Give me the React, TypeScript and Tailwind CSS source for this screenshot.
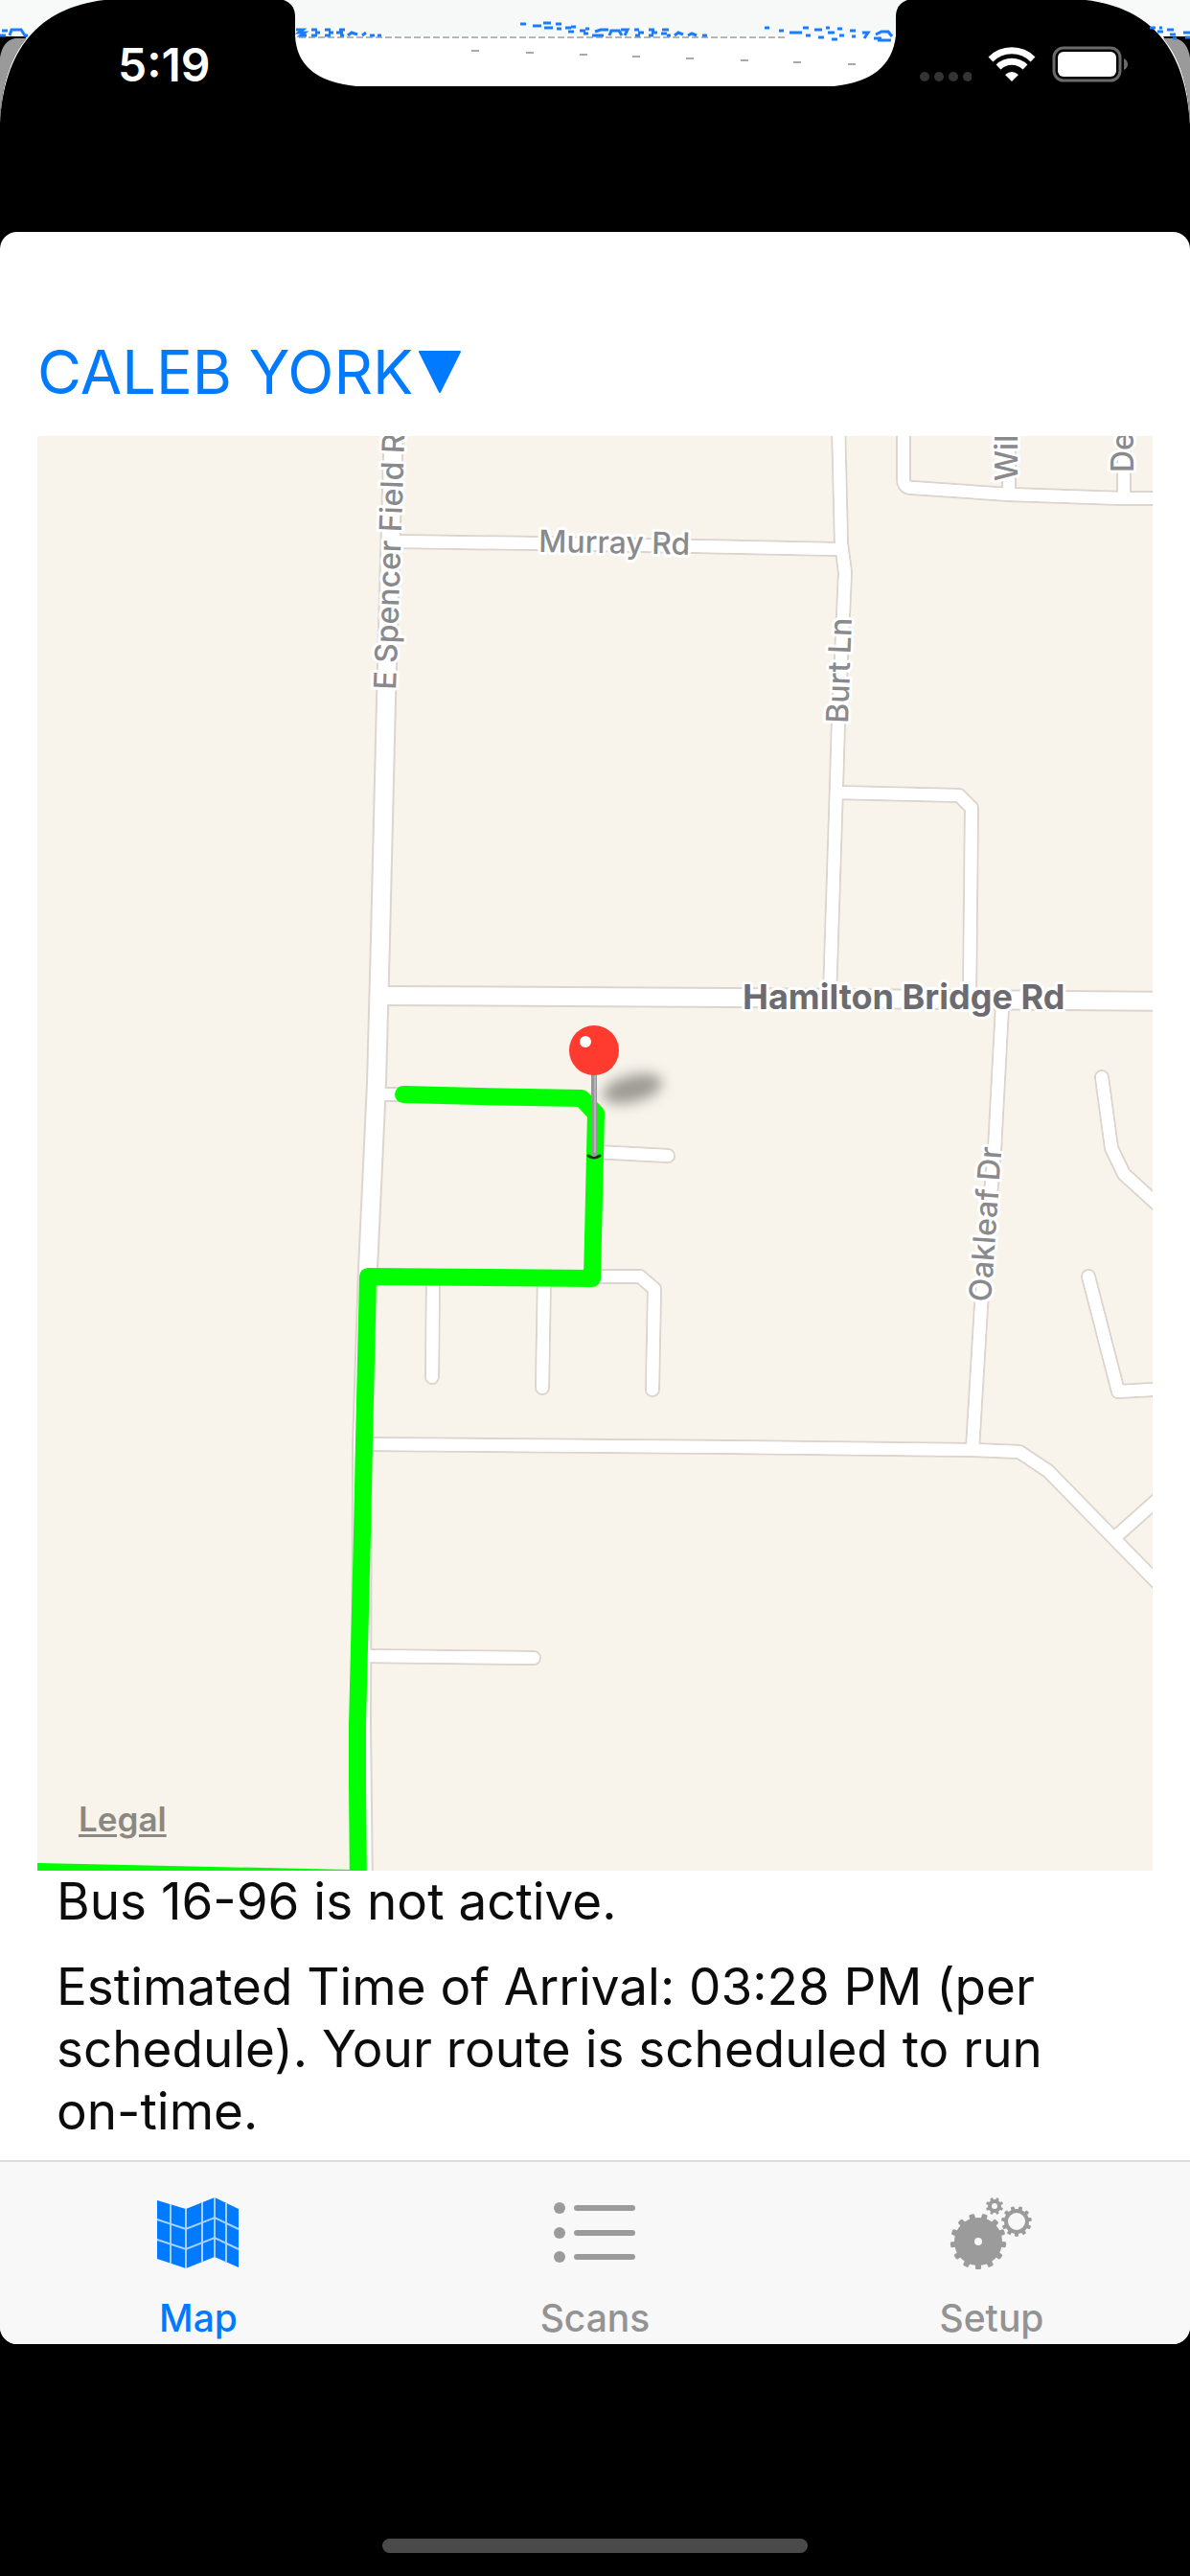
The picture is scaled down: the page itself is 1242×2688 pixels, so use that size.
import React from "react";

const minorRoads = [
  "M415 565 L620 568 L873 573",
  "M875 440 L878 567 L882 597 L875 753 L873 820 L866 1040",
  "M874 827 L1001 830 L1014 843 L1012 1040",
  "M943 440 V500 Q943 509 952 509 L1053 516 L1171 520 H1220",
  "M1053 440 V516",
  "M1173 440 V520",
  "M393 1142 L430 1142",
  "M452 1334 L451 1437",
  "M568 1334 L566 1448",
  "M618 1332 H668 L683 1345 L681 1450",
  "M621 1202 L697 1206",
  "M385 1507 L760 1510 L1014 1513 L1064 1515 L1094 1535 L1220 1664",
  "M1164 1604 L1220 1554",
  "M1046 1050 L1038 1200 L1024 1363 L1015 1512",
  "M1150 1124 L1160 1198 L1173 1225 L1220 1268",
  "M1136 1332 L1167 1452 L1220 1449",
  "M380 1728 L557 1730",
];

const majorRoads = [
  "M411 440 L403 730 L397 980 L393 1130 L384 1324 L378 1508 L377 1800 L379 1970",
  "M397 1039 L760 1041 L1220 1045",
];

const labels = [
  { text: "E Spencer Field R", x: 413, y: 720, angle: -88 },
  { text: "Murray Rd", x: 562, y: 576, angle: 1 },
  { text: "Burt Ln", x: 885, y: 755, angle: -88 },
  { text: "Wil", x: 1062, y: 502, angle: -90 },
  { text: "De", x: 1183, y: 493, angle: -90 },
  { text: "Oakleaf Dr", x: 1034, y: 1359, angle: -86 },
];

function Roads({ paths, outer, inner }: { paths: string[]; outer: number; inner: number }) {
  return (
    <g fill="none" strokeLinecap="round" strokeLinejoin="round">
      {paths.map((d) => (
        <path key={d} d={d} stroke="#dcd5ce" strokeWidth={outer} />
      ))}
      {paths.map((d) => (
        <path key={d + "i"} d={d} stroke="#ffffff" strokeWidth={inner} />
      ))}
    </g>
  );
}

function RouteMap() {
  return (
    <svg viewBox="39 455 1164 1497" className="block h-auto w-full bg-[#f8f4ec]" role="img" aria-label="Route map">
      <defs>
        <filter id="soft" x="-50%" y="-80%" width="200%" height="260%">
          <feGaussianBlur stdDeviation="7" />
        </filter>
      </defs>
      <Roads paths={minorRoads} outer={16} inner={12} />
      <Roads paths={majorRoads} outer={22} inner={18} />
      <g fill="none" stroke="#ffffff" strokeWidth="12">
        {minorRoads.map((d) => (
          <path key={d} d={d} strokeLinejoin="round" strokeLinecap="round" />
        ))}
      </g>
      <g fontSize="32" fontWeight="500" fill="#8a8a8d" stroke="#ffffff" strokeWidth="6" strokeLinejoin="round" paintOrder="stroke">
        {labels.map((l) => (
          <text key={l.text} transform={`translate(${l.x} ${l.y}) rotate(${l.angle})`}>
            {l.text}
          </text>
        ))}
        <text x="775" y="1053" fontSize="36" fontWeight="700" fill="#6c6c70">
          Hamilton Bridge Rd
        </text>
      </g>
      <ellipse cx="660" cy="1136" rx="32" ry="14" fill="#77776f" opacity="0.7" transform="rotate(-14 660 1136)" filter="url(#soft)" />
      <g fill="none" stroke="#00ff00" strokeWidth="18" strokeLinecap="round" strokeLinejoin="round">
        <path d="M421 1142 L500 1144 L607 1146 L622 1162 L618 1334 L384 1332 L380 1502 L378 1600 L373 1800 L373 1862 L374 1970" />
        <path d="M20 1953 L39 1953 L365 1960" />
      </g>
      <path d="M614 1206 q6 4 12 0" fill="none" stroke="#0b3b0b" strokeWidth="3" strokeLinecap="round" />
      <path d="M620 1120 V1204" stroke="#97979b" strokeWidth="6" strokeLinecap="round" />
      <path d="M621 1120 V1203" stroke="#b4b4b8" strokeWidth="2" />
      <circle cx="620" cy="1096" r="26" fill="#ff3a2f" />
      <circle cx="611" cy="1087" r="6" fill="#ffffff" />
    </svg>
  );
}

function StatusShape() {
  const specks = [496, 553, 609, 664, 720, 777, 832, 889];
  return (
    <svg viewBox="0 0 1242 130" className="absolute inset-x-0 top-0 h-auto w-full" aria-hidden="true">
      <path d="M0 0 H109 C40 8 4 52 0 130 Z" fill="#f8fafa" />
      <path d="M1242 0 H1133 C1202 8 1238 52 1242 130 Z" fill="#f8fafa" />
      <path d="M0 38 H28 C10 62 1 90 0 130 Z" fill="#000000" />
      <path d="M1242 38 H1214 C1232 62 1241 90 1242 130 Z" fill="#000000" />
      <path d="M0 60 Q3 42 16 40 H28 C10 62 1 90 0 130 Z" fill="#9a9a9a" />
      <path d="M1242 60 Q1239 42 1226 40 H1214 C1232 62 1241 90 1242 130 Z" fill="#9a9a9a" />
      <path d="M296 0 Q308 4 308 18 V38 H935 V18 Q935 4 947 0 Z" fill="#f7f9f9" />
      <path d="M308 37 Q310 84 372 90 H870 Q930 84 935 37 Z" fill="#ffffff" />
      <path d="M312 39 H820" stroke="#b5b5b5" strokeWidth="2" strokeDasharray="7 3" />
      <g stroke="#a8a8a8" strokeWidth="2">
        {specks.map((x, i) => (
          <path key={x} d={`M${x - 4} ${53 + i * 2} h8`} />
        ))}
      </g>
      <g fill="none" stroke="#1a7dff" strokeWidth="3">
        <path d="M0 37 H6 M10 37 L12 31 H22 L26 37 H29 M2 32 H8" />
        <path d="M309 31 H316 L312 34 H318 L314 37 H320 M325 31 H331 M329 34 H334 M325 37 H331 M339 31 H345 M343 34 H348 M339 37 H345 M354 31 H360 M351 34 H358 M355 37 H359 M363 37 L367 34 L373 36 M378 37 L382 34 M386 37 H391 M394 37 H398" />
        <path d="M543 25 H549 M556 27 H565 M567 24 H575 M568 29 H577 M580 25 H586 M581 30 H586 M590 29 H596 M593 33 H599 M596 28 H601 M605 32 H611 M609 35 H614 M611 30 H615" />
        <path d="M618 37 H630 M621 33 L627 31 H635 M636 37 L638 32 H646 L649 37 M648 31 H655 L652 37 M662 31 H667 M666 34 H672 M663 37 H668 M677 31 H683 M680 34 H686 M677 37 H682 M691 31 H698 M690 35 H696 M696 37 H700 M704 37 L708 34 L713 36 M718 37 L722 35 L727 37 M733 37 H738" />
        <path d="M798 29 H803 M813 32 H818 M824 34 H837 M838 29 H844 M841 37 H846 M850 31 H858 M854 39 H860 M862 29 H866 M864 34 H871 M868 41 H874 M874 30 H879 M876 37 H881 M887 32 H893 M889 38 H893 M900 34 H906 L902 40 M912 40 H920 M914 36 L920 33 H927 L931 38 M916 42 H930" />
        <path d="M1200 29 H1206 M1208 33 H1214 M1210 29 H1213 M1218 31 H1225 M1221 36 H1227 M1224 40 H1228 M1235 34 H1242 M1237 39 H1242" />
      </g>
    </svg>
  );
}

function StatusBar() {
  return (
    <header className="relative h-[242px] w-full shrink-0">
      <StatusShape />
      <div className="relative flex items-start justify-between pt-[40px] pr-[64px] pl-[123px] text-white">
        <time className="text-[48px] leading-[56px] font-semibold">5:19</time>
        <div className="flex items-center gap-[17px] pt-[8px]">
          <svg viewBox="0 0 56 38" className="h-[38px] w-[56px]" fill="#343434" aria-label="No signal">
            <circle cx="7" cy="32" r="5" />
            <circle cx="22" cy="32" r="5" />
            <circle cx="37" cy="32" r="5" />
            <circle cx="52" cy="32" r="5" />
          </svg>
          <svg viewBox="0 0 50 38" className="h-[38px] w-[50px]" fill="none" stroke="#ffffff" aria-label="Wi-Fi">
            <path d="M3 14 A31 31 0 0 1 47 14" strokeWidth="7" />
            <path d="M11 22 A20 20 0 0 1 39 22" strokeWidth="7" />
            <path d="M25 37 L18 30 Q25 24 32 30 Z" fill="#ffffff" stroke="none" />
          </svg>
          <svg viewBox="0 0 80 38" className="h-[38px] w-[80px]" aria-label="Battery full">
            <rect x="2" y="2" width="69" height="34" rx="10" fill="none" stroke="#6a6a6a" strokeWidth="3" />
            <rect x="6" y="6" width="61" height="26" rx="6" fill="#ffffff" />
            <path d="M75 13 Q79 15 79 19 Q79 23 75 25 Z" fill="#6a6a6a" />
          </svg>
        </div>
      </div>
    </header>
  );
}

function MapIcon() {
  return (
    <svg viewBox="0 0 88 76" className="h-[76px] w-[88px]" aria-hidden="true">
      <path d="M1 4 L31 13 L61 1 L86 13 V74 L61 63 L31 75 L1 65 Z" fill="#007aff" />
      <g fill="none" stroke="#a9d1ff" strokeWidth="2">
        <path d="M15 8 V70 M31 13 V75 M48 6 V68 M61 1 V63 M73 7 V69" />
        <path d="M1 24 L31 34 L61 22 L86 34 M1 45 L31 55 L61 43 L86 55" />
      </g>
    </svg>
  );
}

function ListIcon() {
  return (
    <svg viewBox="0 0 88 76" className="h-[76px] w-[88px]" aria-hidden="true">
      <g fill="#9b9b9b">
        <circle cx="7" cy="12" r="6" />
        <circle cx="7" cy="38" r="6" />
        <circle cx="7" cy="63" r="6" />
      </g>
      <path d="M25 12 H83 M25 38 H83 M25 63 H83" stroke="#9b9b9b" strokeWidth="6" strokeLinecap="round" />
    </svg>
  );
}

function Gear({ cx, cy, r, teeth, hole, tooth }: { cx: number; cy: number; r: number; teeth: number; hole: number; tooth: number }) {
  return (
    <g transform={`translate(${cx} ${cy})`}>
      {Array.from({ length: teeth }, (_, i) => (
        <rect key={i} x={-tooth / 2} y={-r - tooth * 0.7} width={tooth} height={tooth * 1.5} rx={tooth / 4} fill="#9b9b9b" transform={`rotate(${(360 / teeth) * (i + 0.5)})`} />
      ))}
      <circle r={(r + hole) / 2} fill="none" stroke="#9b9b9b" strokeWidth={r - hole} />
    </g>
  );
}

function GearsIcon() {
  return (
    <svg viewBox="0 0 88 76" className="h-[76px] w-[88px]" aria-hidden="true">
      <Gear cx={30} cy={47} r={25} teeth={13} hole={4} tooth={6} />
      <Gear cx={47} cy={10} r={7} teeth={8} hole={3} tooth={3} />
      <Gear cx={70} cy={26} r={13} teeth={11} hole={9} tooth={4} />
    </svg>
  );
}

const tabs = [
  { name: "Map", icon: <MapIcon />, active: true },
  { name: "Scans", icon: <ListIcon />, active: false },
  { name: "Setup", icon: <GearsIcon />, active: false },
];

export default function App() {
  return (
    <div className="flex min-h-screen flex-col bg-black font-[Inter,sans-serif]">
      <StatusBar />
      <main className="flex flex-col overflow-hidden rounded-[18px] bg-white">
        <div className="px-[39px] pt-[104px]">
          <button type="button" className="flex items-center gap-[6px] text-[63px] leading-[84px] text-[#007aff]">
            <span>CALEB YORK</span>
            <svg viewBox="0 0 44 44" className="h-[44px] w-[44px]" aria-hidden="true">
              <path d="M1 1 H43 L22 43 Z" fill="#007aff" stroke="#007aff" strokeWidth="2" strokeLinejoin="round" />
            </svg>
          </button>
          <div className="relative mt-[25px]">
            <RouteMap />
            <a href="#legal" className="absolute bottom-[34px] left-[43px] text-[35px] leading-[40px] font-semibold text-[#8b8882] underline decoration-3 underline-offset-3">
              Legal
            </a>
          </div>
        </div>
        <div className="flex flex-col px-[59px] text-[53px] leading-[65px] text-[#0c0c0c]">
          <p>Bus 16-96 is not active.</p>
          <p className="mt-[24px]">
            Estimated Time of Arrival: 03:28 PM (per schedule). Your route is scheduled to run <span className="whitespace-nowrap">on-time.</span>
          </p>
        </div>
        <nav className="mt-[18px] grid grid-cols-3 border-t-2 border-[#dcdcdc] bg-[#f8f8f8] pb-[4px]">
          {tabs.map((t) => (
            <button
              key={t.name}
              type="button"
              className={`flex flex-col items-center pt-[36px] text-[39px] leading-[46px] font-medium ${t.active ? "text-[#007aff]" : "text-[#939393]"}`}
            >
              {t.icon}
              <span className="mt-[28px]">{t.name}</span>
            </button>
          ))}
        </nav>
      </main>
      <footer className="flex flex-1 items-end justify-center pb-[24px]">
        <div className="h-[15px] w-[444px] rounded-full bg-[#4a4a4a]" />
      </footer>
    </div>
  );
}
